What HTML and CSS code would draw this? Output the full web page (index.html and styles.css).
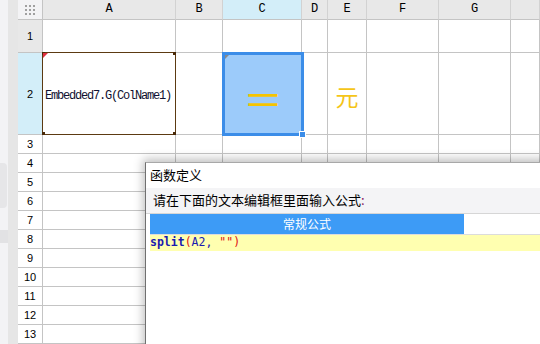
FILE: index.html
```html
<!DOCTYPE html>
<html lang="zh-CN">
<head>
  <meta charset="UTF-8">
  <title>函数定义</title>
  <link rel="stylesheet" href="styles.css">
</head>
<body>
  <div class="app">
    <div class="side">
      <div class="side-a">
        <div class="knob"></div>
        <div class="block"></div>
      </div>
      <div class="side-b"></div>
    </div>

    <div class="sheet">
      <div class="row head">
        <div class="corner">
          <svg width="10" height="10" viewBox="0 0 10 10">
            <g fill="#a0a0a0">
              <rect x="0" y="0" width="2" height="2"/><rect x="4" y="0" width="2" height="2"/><rect x="8" y="0" width="2" height="2"/>
              <rect x="0" y="4" width="2" height="2"/><rect x="4" y="4" width="2" height="2"/><rect x="8" y="4" width="2" height="2"/>
              <rect x="0" y="8" width="2" height="2"/><rect x="4" y="8" width="2" height="2"/><rect x="8" y="8" width="2" height="2"/>
            </g>
          </svg>
        </div>
        <div>A</div><div>B</div><div class="on">C</div><div>D</div><div>E</div><div>F</div><div>G</div><div></div>
      </div>

      <div class="row r1">
        <div class="num grey">1</div><div></div><div></div><div></div><div></div><div></div><div></div><div></div><div></div>
      </div>

      <div class="row r2">
        <div class="num on">2</div>
        <div class="cell-a2">
          <span class="formula">Embedded7.G(ColName1)</span>
          <span class="dot tl"></span><span class="dot tr"></span><span class="dot bl"></span><span class="dot br"></span>
          <span class="flag"></span>
        </div>
        <div></div>
        <div class="cell-c2">
          <div class="sel">
            <span class="mark"></span>
            <span class="big">＝</span>
            <span class="handle"></span>
          </div>
        </div>
        <div></div>
        <div class="cell-e2">元</div>
        <div></div><div></div><div></div>
      </div>

      <div class="row"><div class="num">3</div><div></div><div></div><div></div><div></div><div></div><div></div><div></div><div></div></div>
      <div class="row"><div class="num">4</div><div></div><div></div><div></div><div></div><div></div><div></div><div></div><div></div></div>
      <div class="row"><div class="num">5</div><div></div><div></div><div></div><div></div><div></div><div></div><div></div><div></div></div>
      <div class="row"><div class="num">6</div><div></div><div></div><div></div><div></div><div></div><div></div><div></div><div></div></div>
      <div class="row"><div class="num">7</div><div></div><div></div><div></div><div></div><div></div><div></div><div></div><div></div></div>
      <div class="row"><div class="num">8</div><div></div><div></div><div></div><div></div><div></div><div></div><div></div><div></div></div>
      <div class="row"><div class="num">9</div><div></div><div></div><div></div><div></div><div></div><div></div><div></div><div></div></div>
      <div class="row"><div class="num">10</div><div></div><div></div><div></div><div></div><div></div><div></div><div></div><div></div></div>
      <div class="row"><div class="num">11</div><div></div><div></div><div></div><div></div><div></div><div></div><div></div><div></div></div>
      <div class="row"><div class="num">12</div><div></div><div></div><div></div><div></div><div></div><div></div><div></div><div></div></div>
      <div class="row"><div class="num">13</div><div></div><div></div><div></div><div></div><div></div><div></div><div></div><div></div></div>
    </div>

    <div class="dialog">
      <div class="title">函数定义</div>
      <div class="hint">请在下面的文本编辑框里面输入公式<span class="colon">:</span></div>
      <div class="tab">常规公式</div>
      <div class="code"><b class="kw">split</b><span class="p">(</span><span class="kw">A2,</span> <span class="p">"")</span></div>
    </div>
  </div>
</body>
</html>
```

FILE: styles.css
```css
* { box-sizing: border-box; }
body { margin: 0; background: #fff; overflow: hidden; }

.app {
  position: relative;
  display: flex;
  width: 540px;
  height: 344px;
  overflow: hidden;
}

/* left strip */
.side { display: flex; width: 18px; flex: none; }
.side-a { position: relative; width: 8px; background: #f3f3f5; }
.side-b { width: 10px; background: #e6e6e6; }
.knob {
  position: absolute;
  left: 0; top: 163px;
  width: 7px; height: 45px;
  background: #e6e6e8;
  border-radius: 0 4px 4px 0;
}
.block {
  position: absolute;
  left: 0; top: 230px;
  width: 8px; height: 13px;
  background: #e2e2e4;
}

/* grid */
.sheet { flex: 1; }

.row {
  display: grid;
  grid-template-columns: 25px 133px 47px 79px 26px 39px 72px 72px 1fr;
  height: 19px;
}
.row > div {
  border-right: 1px solid #c4c4c4;
  border-bottom: 1px solid #c4c4c4;
}

.head { height: 20px; background: #e8e8e8; }
.head > div {
  font-family: "Liberation Mono", monospace;
  font-size: 12px;
  line-height: 19px;
  text-align: center;
  color: #000;
  border-right-color: #d2d2d2;
  border-bottom-color: #c4c4c4;
}
.head .corner {
  display: flex;
  align-items: center;
  justify-content: center;
  background: #f3f3f5;
  border-right-color: #c4c4c4;
}
.head .on { background: #d3eef9; }

.r1 { height: 33px; }
.r2 { height: 82px; }

.num {
  display: flex;
  align-items: center;
  justify-content: center;
  font-family: "Liberation Sans", sans-serif;
  font-size: 11px;
  color: #000;
}
.num.grey { background: #e8e8e8; }
.num.on { background: #d3eef9; }

/* A2 */
.row > .cell-a2 {
  position: relative;
  display: flex;
  align-items: center;
  padding: 4px 0 0 2px;
}
.cell-a2::before {
  content: "";
  position: absolute;
  left: -1px; top: -1px; right: -1px; bottom: -1px;
  border: 1px solid #5c3a12;
}
.formula {
  font-family: "Liberation Mono", monospace;
  font-size: 12px;
  letter-spacing: -1.2px;
  color: #101030;
  white-space: nowrap;
}
.flag {
  position: absolute;
  left: 0; top: 0;
  width: 0; height: 0;
  border-top: 5px solid #e03040;
  border-right: 5px solid transparent;
}
.dot {
  position: absolute;
  width: 3px; height: 3px;
  background: #4a2a08;
}
.dot.tl { left: -1px; top: -1px; }
.dot.tr { right: -1px; top: -1px; }
.dot.bl { left: -1px; bottom: -1px; }
.dot.br { right: -1px; bottom: -1px; }

/* C2 selection */
.row > .cell-c2 { position: relative; }
.sel {
  position: absolute;
  left: -1px; top: -1px; right: -3px; bottom: -2px;
  display: flex;
  align-items: center;
  justify-content: center;
  padding-top: 8px;
  background: #9ccbfa;
  border: 3px solid #3b8de8;
}
.mark {
  position: absolute;
  left: 0; top: 0;
  width: 0; height: 0;
  border-top: 4px solid #8a8a8a;
  border-right: 4px solid transparent;
}
.big {
  font-family: "Noto Sans CJK SC", sans-serif;
  font-size: 40px;
  line-height: 1;
  color: #f5c400;
}
.handle {
  position: absolute;
  right: -5px; bottom: -5px;
  width: 7px; height: 7px;
  background: #3b8de8;
  border: 1px solid #fff;
}

.row > .cell-e2 {
  display: flex;
  align-items: center;
  justify-content: center;
  padding-top: 5px;
  font-family: "Noto Sans CJK SC", sans-serif;
  font-size: 23px;
  color: #f5c518;
}

/* dialog */
.dialog {
  position: absolute;
  left: 145px;
  top: 162px;
  width: 420px;
  height: 200px;
  background: #fff;
  border-left: 1px solid #707070;
  border-top: 1px solid #a8a8a8;
  box-shadow: -2px -3px 9px rgba(0, 0, 0, 0.25);
  font-family: "Noto Sans CJK SC", sans-serif;
  font-size: 13px;
  color: #000;
}
.title {
  height: 25px;
  line-height: 24px;
  padding-left: 4px;
}
.hint {
  height: 26px;
  line-height: 24px;
  padding-left: 7px;
  background: #f4f4f6;
  border-bottom: 1px solid #d6d6d6;
}
.colon { color: #8a2060; }
.tab {
  width: 314px;
  height: 20px;
  margin-left: 4px;
  line-height: 20px;
  text-align: center;
  background: #3d9bf6;
  color: #fff;
  font-size: 12px;
}
.code {
  height: 17px;
  margin-left: 4px;
  border-top: 1px solid #dcdcdc;
  background: #ffffb0;
  font-family: "DejaVu Sans Mono", monospace;
  font-size: 11.5px;
  line-height: 15px;
  white-space: pre;
}
.code .kw { color: #1a1ab0; }
.code b.kw { font-weight: bold; }
.code .p { color: #e01010; }
```
